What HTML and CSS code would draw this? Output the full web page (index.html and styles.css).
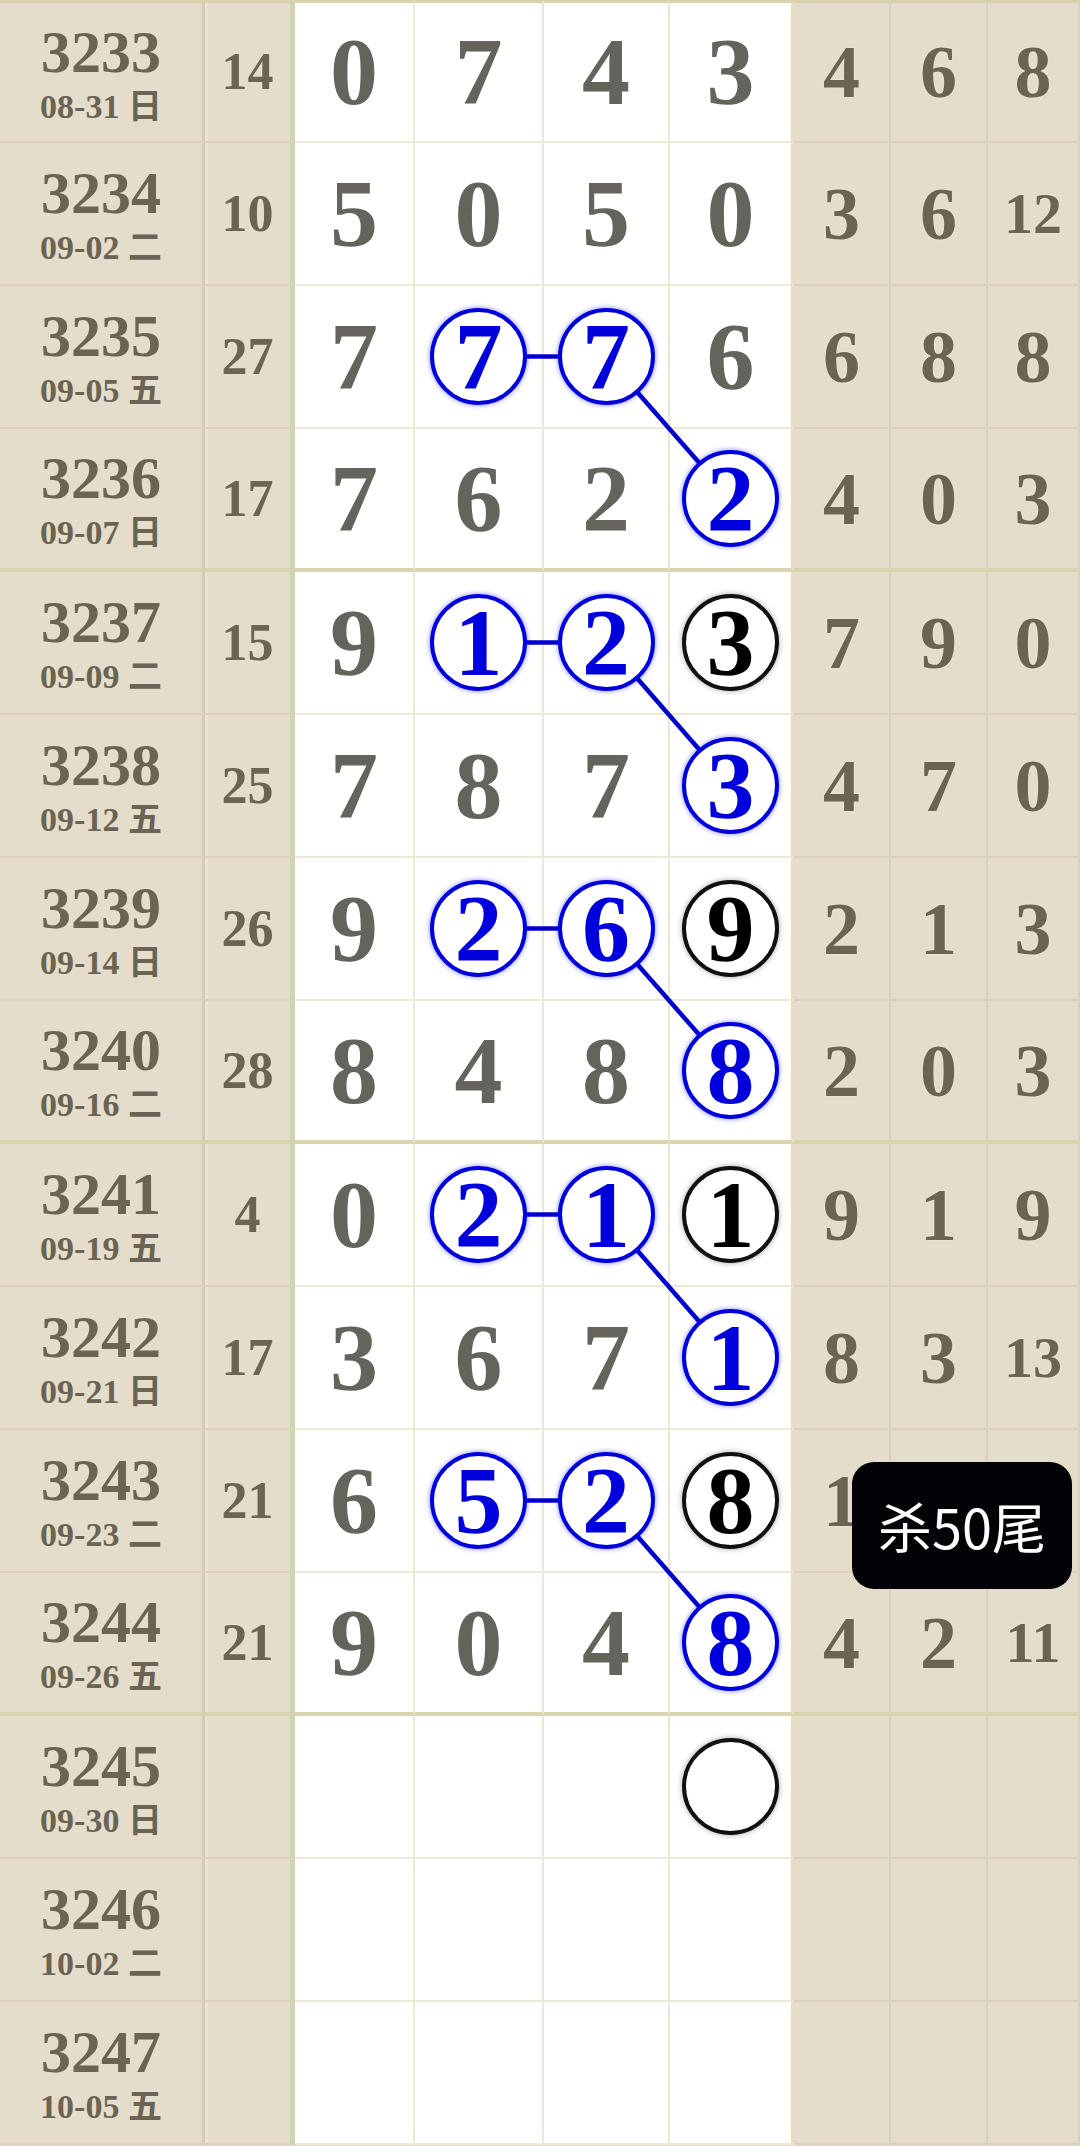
FILE: index.html
```html
<!DOCTYPE html>
<html lang="zh-CN">
<head>
  <meta charset="UTF-8">
  <title>排列走势</title>
  <link rel="stylesheet" href="styles.css">
</head>
<body>

<div class="chart" id="chart">
  <svg class="links" id="links" xmlns="http://www.w3.org/2000/svg"></svg>
</div>

<!-- toast -->
<div class="toast">杀50尾</div>

<script>
  // hit: 0 plain, 1 blue ball, 2 black ball
  var draws = [
    { no: "3233", date: "08-31 日", sum: "14", nums: [0, 7, 4, 3], tail: [4, 6, 8] },
    { no: "3234", date: "09-02 二", sum: "10", nums: [5, 0, 5, 0], tail: [3, 6, 12] },
    { no: "3235", date: "09-05 五", sum: "27", nums: [7, 7, 7, 6], tail: [6, 8, 8], hit: [0, 1, 1, 0] },
    { no: "3236", date: "09-07 日", sum: "17", nums: [7, 6, 2, 2], tail: [4, 0, 3], hit: [0, 0, 0, 1] },
    { no: "3237", date: "09-09 二", sum: "15", nums: [9, 1, 2, 3], tail: [7, 9, 0], hit: [0, 1, 1, 2] },
    { no: "3238", date: "09-12 五", sum: "25", nums: [7, 8, 7, 3], tail: [4, 7, 0], hit: [0, 0, 0, 1] },
    { no: "3239", date: "09-14 日", sum: "26", nums: [9, 2, 6, 9], tail: [2, 1, 3], hit: [0, 1, 1, 2] },
    { no: "3240", date: "09-16 二", sum: "28", nums: [8, 4, 8, 8], tail: [2, 0, 3], hit: [0, 0, 0, 1] },
    { no: "3241", date: "09-19 五", sum: "4", nums: [0, 2, 1, 1], tail: [9, 1, 9], hit: [0, 1, 1, 2] },
    { no: "3242", date: "09-21 日", sum: "17", nums: [3, 6, 7, 1], tail: [8, 3, 13], hit: [0, 0, 0, 1] },
    { no: "3243", date: "09-23 二", sum: "21", nums: [6, 5, 2, 8], tail: [1, "", ""], hit: [0, 1, 1, 2] },
    { no: "3244", date: "09-26 五", sum: "21", nums: [9, 0, 4, 8], tail: [4, 2, 11], hit: [0, 0, 0, 1] },
    { no: "3245", date: "09-30 日", hit: [0, 0, 0, 2] },
    { no: "3246", date: "10-02 二" },
    { no: "3247", date: "10-05 五" }
  ];

  var chart = document.getElementById("chart");
  var links = document.getElementById("links");
  var balls = [];

  function cell(cls, text) {
    var el = document.createElement("div");
    el.className = "cell " + cls;
    if (text !== undefined) el.textContent = text;
    return el;
  }

  draws.forEach(function(d, r) {
    var row = document.createElement("div");
    row.className = "row";
    if (r === 0) row.classList.add("first");
    if (parseInt(d.no, 10) % 4 === 0) row.classList.add("end");

    var issue = cell("issue");
    issue.innerHTML = "<b>" + d.no + "</b><small>" + d.date + "</small>";
    row.appendChild(issue);
    row.appendChild(cell("sum", d.sum || ""));

    balls[r] = [];
    for (var i = 0; i < 4; i++) {
      var c = cell("num");
      var hit = d.hit ? d.hit[i] : 0;
      var val = d.nums ? String(d.nums[i]) : "";
      if (hit) {
        var ball = document.createElement("span");
        ball.className = hit === 2 ? "ball black" : "ball";
        ball.textContent = val;
        c.appendChild(ball);
        balls[r][i] = ball;
      } else {
        c.textContent = val;
      }
      row.appendChild(c);
    }

    for (var j = 0; j < 3; j++) {
      var t = d.tail ? String(d.tail[j]) : "";
      var tc = cell("tail", t);
      if (t.length > 1) tc.classList.add("two");
      row.appendChild(tc);
    }

    chart.appendChild(row);
  });

  // connect the pairs: side by side, then down to the next row
  function center(el) {
    var a = el.getBoundingClientRect();
    var b = chart.getBoundingClientRect();
    return [a.left - b.left + a.width / 2, a.top - b.top + a.height / 2];
  }

  function line(p, q) {
    var l = document.createElementNS("http://www.w3.org/2000/svg", "line");
    l.setAttribute("x1", p[0]);
    l.setAttribute("y1", p[1]);
    l.setAttribute("x2", q[0]);
    l.setAttribute("y2", q[1]);
    links.appendChild(l);
  }

  links.setAttribute("width", chart.offsetWidth);
  links.setAttribute("height", chart.offsetHeight);

  balls.forEach(function(row, r) {
    if (row[1] && row[2]) {
      line(center(row[1]), center(row[2]));
      if (balls[r + 1] && balls[r + 1][3]) {
        line(center(row[2]), center(balls[r + 1][3]));
      }
    }
  });
</script>

</body>
</html>
```

FILE: styles.css
```css
* {
  box-sizing: border-box;
}
body {
  margin: 0;
  background-color: #e4ddcc;
  font-family: "Liberation Serif", "Noto Sans CJK SC", serif;
  font-weight: bold;
  overflow: hidden;
}
.chart {
  position: relative;
  width: 1080px;
}
.row {
  display: grid;
  grid-template-columns: 205px 90px 120px 129px 126px 124px 97px 97px 92px;
  height: 143px;
}
.cell {
  display: flex;
  align-items: center;
  justify-content: center;
  line-height: 1;
  border-bottom: 2px solid #d9d1be;
  border-right: 2px solid #d9d1be;
  background-color: #e4ddcc;
  color: #6b6353;
}
.row.first .cell {
  border-top: 3px solid #d8d3ad;
}
.row.end .cell {
  border-bottom: 4px solid #d8d4ac;
}

/* issue + date */
.issue {
  flex-direction: column;
  border-right: 3px solid #d4ccb7;
}
.issue b {
  display: block;
  font-size: 60px;
  line-height: 68px;
}
.issue small {
  display: block;
  font-size: 34px;
  line-height: 40px;
  margin-top: 1px;
}
.sum {
  font-size: 52px;
  border-right: 5px solid #cdd5ae;
  box-shadow: inset 3px 0 0 #e9e3d5;
}

/* drawn numbers */
.num {
  background-color: #fff;
  color: #64645c;
  font-size: 96px;
  border-right: 2px solid #ece8d4;
  border-bottom-color: #ece9d6;
}
.num:nth-child(6) {
  border-right: 3px solid #ecdcc2;
}
.ball {
  position: relative;
  z-index: 2;
  display: flex;
  align-items: center;
  justify-content: center;
  width: 97px;
  height: 97px;
  border: 4px solid #0000dd;
  border-radius: 50%;
  background-color: #fff;
  color: #0000dd;
  box-shadow: 0 0 4px 1px rgba(0, 0, 255, 0.35);
}
.ball.black {
  border-color: #111;
  color: #000;
  box-shadow: 0 0 5px 1px rgba(0, 0, 0, 0.25);
}

/* tails */
.tail {
  font-size: 74px;
  text-shadow: 0 0 2px rgba(255, 255, 255, 0.6);
}
.tail.two {
  font-size: 58px;
}

.links {
  position: absolute;
  left: 0;
  top: 0;
  z-index: 1;
  pointer-events: none;
}
.links line {
  stroke: #0000cc;
  stroke-width: 4.5;
}

.toast {
  position: absolute;
  left: 852px;
  top: 1462px;
  z-index: 3;
  display: flex;
  align-items: center;
  justify-content: center;
  width: 220px;
  height: 127px;
  border-radius: 22px;
  background-color: #020207;
  color: #fff;
  font-family: "Noto Sans CJK SC", "Noto Sans", sans-serif;
  font-weight: normal;
  font-size: 54px;
}
```
